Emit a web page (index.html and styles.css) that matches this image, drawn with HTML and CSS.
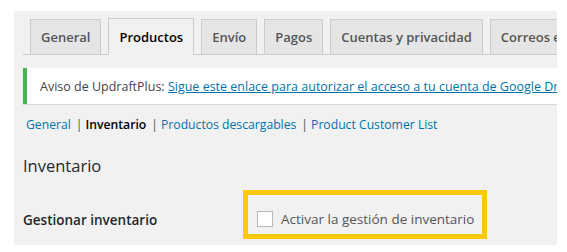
FILE: index.html
```html
<!DOCTYPE html>
<html lang="es">
<head>
<meta charset="utf-8">
<title>Ajustes - Productos</title>
<link rel="stylesheet" href="styles.css">
</head>
<body>
<div class="wrap">
  <nav class="tabs">
    <a class="tab">General</a>
    <a class="tab active">Productos</a>
    <a class="tab">Envío</a>
    <a class="tab">Pagos</a>
    <a class="tab">Cuentas y privacidad</a>
    <a class="tab">Correos electrónicos</a>
  </nav>
  <div class="notice">
    <p>Aviso de UpdraftPlus: <a class="link">Sigue este enlace para autorizar el acceso a tu cuenta de Google Drive</a></p>
  </div>
  <ul class="subnav">
    <li><a class="sublink">General</a><span class="sep">|</span></li>
    <li><a class="sublink current">Inventario</a><span class="sep">|</span></li>
    <li><a class="sublink">Productos descargables</a><span class="sep">|</span></li>
    <li><a class="sublink">Product Customer List</a></li>
  </ul>
  <h2 class="title">Inventario</h2>
  <div class="row">
    <div class="label">Gestionar inventario</div>
    <div class="field">
      <label class="check"><span class="box"></span>Activar la gestión de inventario</label>
    </div>
  </div>
</div>
</body>
</html>
```
FILE: styles.css
```css
html, body {
  margin: 0;
  padding: 0;
  background: #ffffff;
}
body {
  font-family: "Open Sans", "Noto Sans", sans-serif;
  color: #23282d;
}
.wrap {
  margin: 11px 0 0 14px;
  width: 534px;
  height: 234px;
  padding-left: 9px;
  background: #f1f1f1;
  overflow: hidden;
}
.tabs {
  display: flex;
  align-items: flex-end;
  padding-top: 7px;
  padding-left: 7px;
  border-bottom: 1px solid #ccc;
  white-space: nowrap;
  width: 700px;
}
.tab {
  box-sizing: border-box;
  height: 35px;
  display: flex;
  align-items: center;
  padding: 0 10px;
  margin-right: 7px;
  border: 1px solid #ccc;
  border-bottom: none;
  background: #e5e5e5;
  color: #555;
  font-size: 13px;
  font-weight: 600;
}
.tab.active {
  height: 37px;
  margin-bottom: -1px;
  background: #f1f1f1;
  color: #000;
}
.notice {
  margin-top: 13px;
  width: 700px;
  height: 36px;
  background: #fff;
  border-left: 4px solid #46b450;
  box-shadow: 0 1px 1px rgba(0,0,0,0.1);
  display: flex;
  align-items: center;
  padding-left: 13px;
  white-space: nowrap;
}
.notice p {
  margin: 0;
  font-size: 12.5px;
  color: #444;
}
.link {
  color: #0073aa;
  text-decoration: underline;
}
.subnav {
  list-style: none;
  margin: 12px 0 0 3px;
  padding: 0;
  display: flex;
  font-size: 12.2px;
  line-height: 18px;
  white-space: nowrap;
}
.sublink {
  color: #0073aa;
}
.sublink.current {
  color: #000;
  font-weight: 600;
}
.sep {
  color: #555;
  padding: 0 3px 0 5px;
}
.title {
  margin: 20px 0 0;
  font-size: 16.5px;
  font-weight: 400;
  line-height: 24px;
  color: #23282d;
}
.row {
  display: flex;
  align-items: flex-start;
  margin-top: 12px;
}
.label {
  width: 220px;
  font-size: 13.5px;
  font-weight: 600;
  line-height: 20px;
  padding-top: 20px;
}
.field {
  border: 5px solid #ffc90b;
  padding: 14px 8px 5px 9px;
}
.check {
  display: flex;
  align-items: center;
  font-size: 13.5px;
  line-height: 20px;
  color: #555;
}
.box {
  box-sizing: border-box;
  width: 16px;
  height: 16px;
  border: 1px solid #b4b9be;
  background: #fff;
  margin-right: 8px;
}
```
